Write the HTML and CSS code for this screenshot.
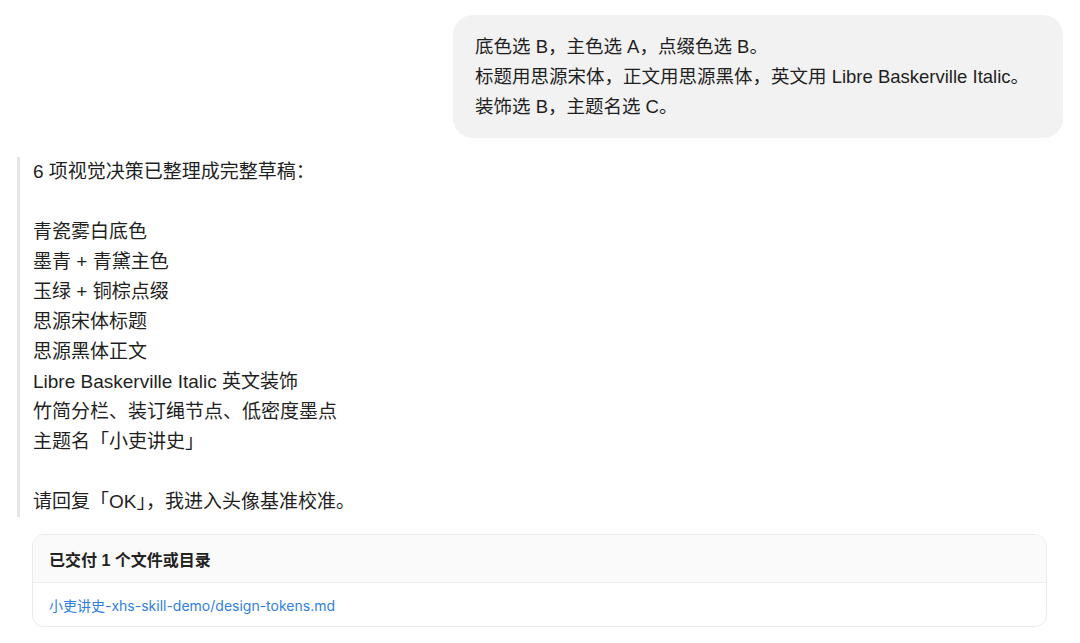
FILE: index.html
```html
<!DOCTYPE html>
<html lang="zh-CN">
<head>
<meta charset="utf-8">
<link rel="stylesheet" href="styles.css">
</head>
<body>
<div class="chat">
  <div class="user-row">
    <div class="bubble">
      <p>底色选 B，主色选 A，点缀色选 B。</p>
      <p>标题用思源宋体，正文用思源黑体，英文用 Libre Baskerville Italic。</p>
      <p>装饰选 B，主题名选 C。</p>
    </div>
  </div>
  <div class="quote">
    <p>6 项视觉决策已整理成完整草稿：</p>
    <p class="blank"></p>
    <p>青瓷雾白底色</p>
    <p>墨青 + 青黛主色</p>
    <p>玉绿 + 铜棕点缀</p>
    <p>思源宋体标题</p>
    <p>思源黑体正文</p>
    <p>Libre Baskerville Italic 英文装饰</p>
    <p>竹简分栏、装订绳节点、低密度墨点</p>
    <p>主题名「小吏讲史」</p>
    <p class="blank"></p>
    <p>请回复「OK」，我进入头像基准校准。</p>
  </div>
  <div class="card">
    <div class="card-head">已交付 1 个文件或目录</div>
    <div class="card-body"><a class="file-link" href="#">小吏讲史-xhs-skill-demo/design-tokens.md</a></div>
  </div>
</div>
</body>
</html>
```

FILE: styles.css
```css
* { box-sizing: border-box; }
html, body { margin: 0; padding: 0; background: #ffffff; }
body {
  font-family: "Liberation Sans", "Noto Sans CJK SC", sans-serif;
  color: #1f1f1f;
  width: 1080px;
  height: 643px;
  overflow: hidden;
}
p { margin: 0; }
.chat {
  display: flex;
  flex-direction: column;
  padding-top: 15px;
}
.user-row {
  display: flex;
  justify-content: flex-end;
  padding-right: 17px;
}
.bubble {
  width: 610px;
  background: #f2f2f2;
  border-radius: 20px;
  padding: 17px 22px 16px 22px;
  font-size: 18.5px;
  line-height: 30px;
  white-space: nowrap;
}
.quote {
  margin: 19px 0 0 17px;
  border-left: 3px solid #e6e6e6;
  padding-left: 13px;
  font-size: 19px;
  line-height: 30px;
}
.blank { height: 30px; }
.card {
  margin: 17px 33px 0 32px;
  border: 1px solid #ebebeb;
  border-radius: 12px;
  overflow: hidden;
}
.card-head {
  background: #fafafa;
  height: 48px;
  display: flex;
  align-items: center;
  padding-left: 16px;
  font-size: 16px;
  font-weight: 700;
  color: #222222;
  border-bottom: 1px solid #ededed;
}
.card-body {
  height: 43px;
  display: flex;
  align-items: center;
  padding-left: 16px;
}
.file-link {
  font-family: "Inter", "Noto Sans CJK SC", sans-serif;
  font-size: 14px;
  color: #2f7fe0;
  text-decoration: none;
}
```
